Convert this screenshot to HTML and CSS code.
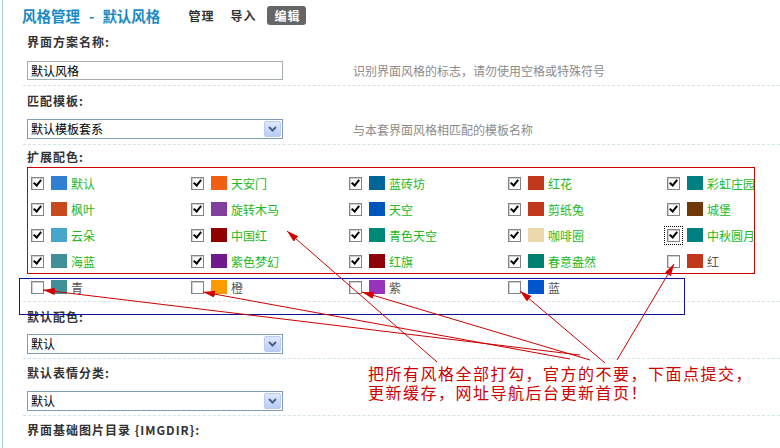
FILE: index.html
```html
<!DOCTYPE html>
<html lang="zh-CN">
<head>
<meta charset="utf-8">
<title>风格管理 - 默认风格</title>
<link rel="stylesheet" href="styles.css">
</head>
<body>
<div class="frame">
  <div class="header">
    <h1 class="title">风格管理<span class="dash">-</span>默认风格</h1>
    <div class="tabs">
      <span class="tab">管理</span>
      <span class="tab">导入</span>
      <span class="tab active">编辑</span>
    </div>
  </div>

  <div class="section s1">
    <div class="label">界面方案名称:</div>
    <div class="ctrl-row">
      <div class="input">默认风格</div>
      <div class="hint">识别界面风格的标志，请勿使用空格或特殊符号</div>
    </div>
  </div>

  <div class="section s2">
    <div class="label">匹配模板:</div>
    <div class="ctrl-row">
      <div class="select"><span>默认模板套系</span><span class="drop"><svg width="9" height="6" viewBox="0 0 9 6"><polyline points="1,1 4.5,4.5 8,1" fill="none" stroke="#4d6185" stroke-width="2"/></svg></span></div>
      <div class="hint">与本套界面风格相匹配的模板名称</div>
    </div>
  </div>

  <div class="section s3">
    <div class="label">扩展配色:</div>
    <div class="colors-box">
      <div class="grid">
        <div class="item"><span class="cb on"></span><span class="sw" style="background:#2f7fd2"></span><span class="name">默认</span></div>
        <div class="item"><span class="cb on"></span><span class="sw" style="background:#f06010"></span><span class="name">天安门</span></div>
        <div class="item"><span class="cb on"></span><span class="sw" style="background:#006699"></span><span class="name">蓝砖坊</span></div>
        <div class="item"><span class="cb on"></span><span class="sw" style="background:#c0381a"></span><span class="name">红花</span></div>
        <div class="item"><span class="cb on"></span><span class="sw" style="background:#008080"></span><span class="name">彩虹庄园</span></div>

        <div class="item"><span class="cb on"></span><span class="sw" style="background:#c84a1c"></span><span class="name">枫叶</span></div>
        <div class="item"><span class="cb on"></span><span class="sw" style="background:#8040a0"></span><span class="name">旋转木马</span></div>
        <div class="item"><span class="cb on"></span><span class="sw" style="background:#0055bb"></span><span class="name">天空</span></div>
        <div class="item"><span class="cb on"></span><span class="sw" style="background:#c0381a"></span><span class="name">剪纸兔</span></div>
        <div class="item"><span class="cb on"></span><span class="sw" style="background:#6e3808"></span><span class="name">城堡</span></div>

        <div class="item"><span class="cb on"></span><span class="sw" style="background:#46a6cc"></span><span class="name">云朵</span></div>
        <div class="item"><span class="cb on"></span><span class="sw" style="background:#900000"></span><span class="name">中国红</span></div>
        <div class="item"><span class="cb on"></span><span class="sw" style="background:#008878"></span><span class="name">青色天空</span></div>
        <div class="item"><span class="cb on"></span><span class="sw" style="background:#ebd9ab"></span><span class="name">咖啡圈</span></div>
        <div class="item"><span class="cb on focus"></span><span class="sw" style="background:#008080"></span><span class="name">中秋圆月</span></div>

        <div class="item"><span class="cb on"></span><span class="sw" style="background:#409098"></span><span class="name">海蓝</span></div>
        <div class="item"><span class="cb on"></span><span class="sw" style="background:#701890"></span><span class="name">紫色梦幻</span></div>
        <div class="item"><span class="cb on"></span><span class="sw" style="background:#90000a"></span><span class="name">红旗</span></div>
        <div class="item"><span class="cb on"></span><span class="sw" style="background:#008070"></span><span class="name">春意盎然</span></div>
        <div class="item"><span class="cb"></span><span class="sw" style="background:#c0381a"></span><span class="name off">红</span></div>
      </div>
    </div>
    <div class="grid extra">
      <div class="item"><span class="cb"></span><span class="sw" style="background:#409098"></span><span class="name off">青</span></div>
      <div class="item"><span class="cb"></span><span class="sw" style="background:#ff9900"></span><span class="name off">橙</span></div>
      <div class="item"><span class="cb"></span><span class="sw" style="background:#9933bb"></span><span class="name off">紫</span></div>
      <div class="item"><span class="cb"></span><span class="sw" style="background:#0055cc"></span><span class="name off">蓝</span></div>
    </div>
  </div>

  <div class="section s4">
    <div class="label">默认配色:</div>
    <div class="ctrl-row">
      <div class="select"><span>默认</span><span class="drop"><svg width="9" height="6" viewBox="0 0 9 6"><polyline points="1,1 4.5,4.5 8,1" fill="none" stroke="#4d6185" stroke-width="2"/></svg></span></div>
    </div>
  </div>

  <div class="section s5">
    <div class="label">默认表情分类:</div>
    <div class="ctrl-row">
      <div class="select"><span>默认</span><span class="drop"><svg width="9" height="6" viewBox="0 0 9 6"><polyline points="1,1 4.5,4.5 8,1" fill="none" stroke="#4d6185" stroke-width="2"/></svg></span></div>
    </div>
  </div>

  <div class="section s6 last">
    <div class="label">界面基础图片目录 {IMGDIR}:</div>
  </div>
</div>

<div class="blue-box"></div>
<div class="note">
  <div class="note-line">把所有风格全部打勾，官方的不要，下面点提交，</div>
  <div class="note-line">更新缓存，网址导航后台更新首页！</div>
</div>
<svg class="arrows" width="780" height="448" viewBox="0 0 780 448">
  <defs>
    <marker id="ah" markerUnits="userSpaceOnUse" markerWidth="13" markerHeight="8" refX="12" refY="3.5" orient="auto">
      <path d="M0,0 L12,3.5 L0,7 z" fill="#d40000"/>
    </marker>
  </defs>
  <g stroke="#cc0000" stroke-width="1" fill="none">
    <line x1="580" y1="355" x2="43" y2="290" marker-end="url(#ah)"/>
    <line x1="570" y1="359" x2="203" y2="292" marker-end="url(#ah)"/>
    <line x1="590" y1="360" x2="362" y2="292" marker-end="url(#ah)"/>
    <line x1="605" y1="363" x2="520" y2="291" marker-end="url(#ah)"/>
    <line x1="617" y1="360" x2="674" y2="264" marker-end="url(#ah)"/>
    <line x1="437" y1="362" x2="287" y2="231" marker-end="url(#ah)"/>
  </g>
</svg>
</body>
</html>
```

FILE: styles.css
```css
html, body {
  margin: 0;
  padding: 0;
}
body {
  position: relative;
  width: 780px;
  height: 448px;
  overflow: hidden;
  background: #ffffff;
  font-family: "Noto Sans CJK SC", "Liberation Sans", sans-serif;
  font-size: 12px;
  color: #333;
}
.frame {
  margin-left: 2px;
  height: 448px;
  border-left: 1px solid #a9d1e3;
}
.header {
  display: flex;
  align-items: center;
  height: 31px;
  padding-left: 19px;
  box-sizing: border-box;
}
.title {
  margin: 0;
  font-size: 14.5px;
  line-height: 20px;
  font-weight: bold;
  color: #1a8ac5;
}
.title .dash {
  margin: 0 8px 0 9px;
}
.tabs {
  display: flex;
  margin-left: 21px;
  gap: 3px;
}
.tab {
  font-weight: bold;
  letter-spacing: 1px;
  padding: 0 6px 0 7px;
  line-height: 19px;
  height: 19px;
  color: #333;
  border-radius: 3px;
}
.tab.active {
  background: #666;
  color: #fff;
  margin-left: 2px;
}
.section {
  margin-left: 20px;
  border-bottom: 1px dashed #d3e3ea;
}
.section.last {
  border-bottom: none;
}
.label {
  padding-left: 4px;
  line-height: 20px;
  height: 20px;
  font-weight: bold;
  letter-spacing: 1px;
  color: #333;
}
.ctrl-row {
  display: flex;
  align-items: center;
  padding-left: 4px;
}
.input {
  width: 256px;
  height: 19px;
  box-sizing: border-box;
  border: 1px solid #a5acb2;
  background: #fff;
  padding-left: 3px;
  line-height: 17px;
  color: #000;
}
.select {
  width: 256px;
  height: 20px;
  box-sizing: border-box;
  border: 1px solid #7f9db9;
  background: #fff;
  padding-left: 3px;
  line-height: 18px;
  color: #000;
  display: flex;
  justify-content: space-between;
  align-items: center;
}
.drop {
  width: 17px;
  height: 16px;
  margin-right: 1px;
  box-sizing: border-box;
  border: 1px solid #b9cbf3;
  border-radius: 2px;
  background: linear-gradient(#dfe8fd, #b9ccf8);
  display: flex;
  align-items: center;
  justify-content: center;
}
.hint {
  margin-left: 70px;
  color: #8c8c8c;
}
.s1 { padding-top: 1px; padding-bottom: 5px; }
.s1 .ctrl-row { margin-top: 9px; }
.s2 { padding-top: 5px; padding-bottom: 5px; }
.s2 .ctrl-row { margin-top: 8px; }
.s3 { padding-top: 2px; padding-bottom: 1px; }
.s4 { padding-top: 5px; padding-bottom: 4px; }
.s4 .ctrl-row { margin-top: 7px; }
.s5 { padding-top: 4px; padding-bottom: 4px; }
.s5 .ctrl-row { margin-top: 8px; }
.s6 { padding-top: 4px; }

.colors-box {
  margin-left: 4px;
  width: 726px;
  height: 103px;
  border: 1px solid #cc0000;
  padding-top: 2px;
}
.grid {
  display: grid;
  grid-template-columns: 160px 158px 159px 159px 86px;
  grid-auto-rows: 26px;
  padding-left: 3px;
}
.grid.extra {
  padding-left: 8px;
}
.item {
  display: flex;
  align-items: center;
  white-space: nowrap;
}
.cb {
  width: 13px;
  height: 13px;
  box-sizing: border-box;
  border: 1px solid #858585;
  background: #fff;
  box-shadow: inset 1px 1px 0 #d0d0d0;
  margin-right: 7px;
  position: relative;
  flex: none;
}
.cb.on::after {
  content: "";
  position: absolute;
  left: 3px;
  top: 0;
  width: 3px;
  height: 6px;
  border-right: 2px solid #000;
  border-bottom: 2px solid #000;
  transform: rotate(40deg);
}
.cb.focus {
  outline: 1px dotted #000;
  outline-offset: 2px;
}
.sw {
  width: 16px;
  height: 14px;
  margin-right: 4px;
  flex: none;
}
.name {
  color: #22b922;
}
.name.off {
  color: #555;
}

.blue-box {
  position: absolute;
  left: 19px;
  top: 278px;
  width: 664px;
  height: 35px;
  border: 1px solid #1010a0;
  pointer-events: none;
}
.note {
  position: absolute;
  left: 368px;
  top: 364px;
  color: #cc0000;
  white-space: nowrap;
}
.note-line {
  font-size: 16px;
  letter-spacing: 1.5px;
  line-height: 19px;
  height: 19px;
}
.arrows {
  position: absolute;
  left: 0;
  top: 0;
  pointer-events: none;
}
```
